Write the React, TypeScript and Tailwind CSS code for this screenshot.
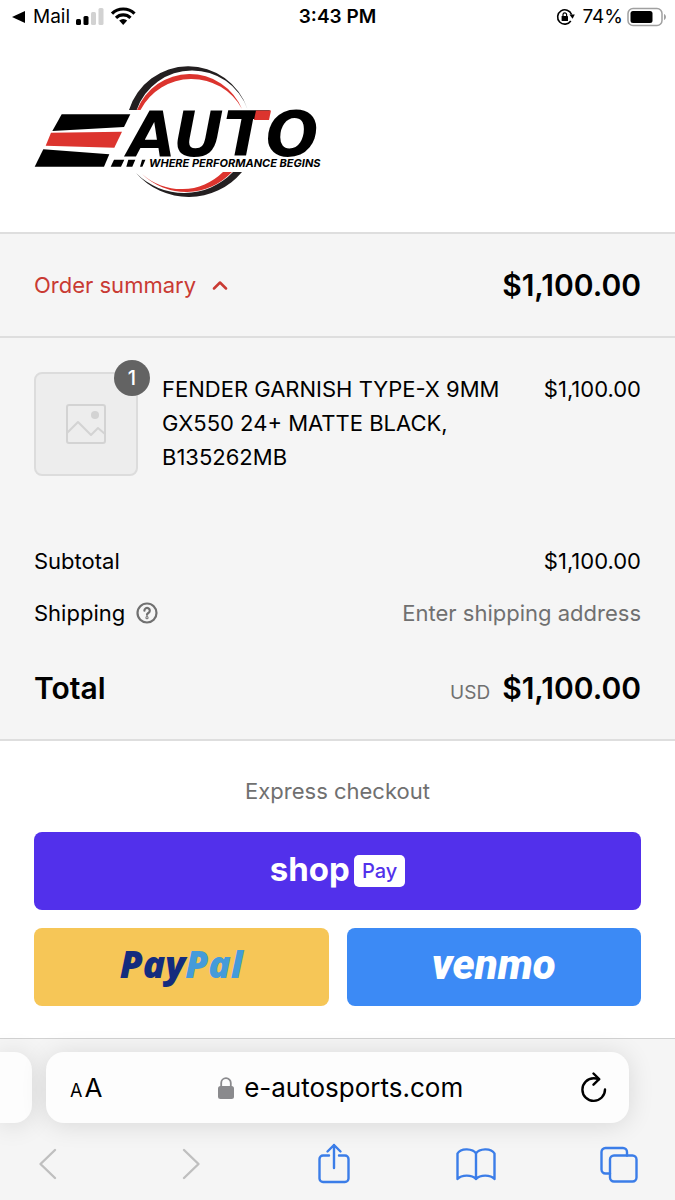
import type { ReactNode } from "react";

function StatusBar() {
  return (
    <div className="grid grid-cols-3 items-center bg-white px-3 text-[19px] leading-[34px] text-black">
      <div className="flex items-center gap-1.5">
        <a href="#mail" className="flex items-center gap-2">
          <svg width="13" height="12" viewBox="0 0 13 12" aria-hidden="true">
            <path d="M0 6 13 0v12z" fill="currentColor" />
          </svg>
          Mail
        </a>
        <svg width="60" height="20" viewBox="0 0 60 20" aria-label="Signal and Wi-Fi">
          <rect x="0" y="12" width="5" height="6" rx="1.5" />
          <rect x="7.500" y="9" width="5" height="9" rx="1.500" />
          <rect x="15" y="5" width="5" height="13" rx="1.500" fill="#d2d2d2" />
          <rect x="22.500" y="1" width="5" height="17" rx="1.500" fill="#d2d2d2" />
          <g fill="none" stroke="#000" strokeWidth="3.200">
            <path d="M36 6.600a16 16 0 0 1 22.500 0" />
            <path d="M40 10.800a10.500 10.500 0 0 1 14.500 0" />
          </g>
          <path d="M43.200 13.600a6 6 0 0 1 8 0l-4 4.400z" />
        </svg>
      </div>
      <div className="text-center font-semibold">3:43 PM</div>
      <div className="-mr-1 flex items-center justify-end gap-1">
        <svg width="20" height="18" viewBox="0 0 20 18" className="mr-0.5" aria-label="Rotation lock">
          <path d="M14.800 13A7.200 7.200 0 1 1 15.600 6.500" fill="none" stroke="#000" strokeWidth="1.600" />
          <path d="M13.400 6.500h5.400l-2.200 4.300z" />
          <rect x="5.600" y="8" width="6.400" height="5" rx=".6" />
          <path d="M7 8V6.600a1.800 1.800 0 0 1 3.600 0V8" fill="none" stroke="#000" strokeWidth="1.200" />
        </svg>
        74%
        <svg width="40" height="20" viewBox="0 0 40 20" aria-label="Battery">
          <rect x="1" y="1.500" width="34" height="17" rx="5" fill="none" stroke="#a0a0a0" strokeWidth="1.500" />
          <rect x="3.500" y="4" width="22" height="12" rx="2.500" />
          <path d="M37 7v6c2.600-1 2.600-5 0-6z" fill="#a0a0a0" />
        </svg>
      </div>
    </div>
  );
}

function Logo() {
  return (
    <svg width="310" height="132" viewBox="34 66 310 132" role="img" aria-label="E-Auto">
      <g fill="#231f20">
        <path d="M129 110A62.200 62.200 0 0 1 247.500 109A58.800 58.800 0 0 0 136.700 110z" />
        <path d="M136 173A69.600 69.600 0 0 0 242 172H233A67.600 67.600 0 0 1 136 173z" />
      </g>
      <g fill="#dc342e">
        <path d="M137 110A56.600 56.600 0 0 1 242 109A57.400 57.400 0 0 0 140.500 110z" />
        <path d="M142 174A62.800 62.800 0 0 0 232 172H223A59 59 0 0 1 142 174z" />
        <path d="M51 132.700 122 131.700 114.300 147.700 45.700 145.700z" />
      </g>
      <path d="M61.700 114.300H130.300L124 127 52.300 131z" />
      <path d="M43.300 149.300 109.300 154.300 104 166.700H34.700z" />
      <path d="M114 159.700h10.300l-3.300 7h-10.300zM128.300 159.700h7l-3 7h-6zM142 159.700h3.400l-3 7H140z" />
      <text x="128" y="156" className="font-['DejaVu_Sans',sans-serif] text-[62px] font-bold italic">
        AUTO
      </text>
      <path d="M256 110.500h15l-2 9.500h-15z" fill="#dc342e" />
      <text x="149" y="167" className="font-[Inter,sans-serif] text-[11px] font-bold italic">
        WHERE PERFORMANCE BEGINS
      </text>
    </svg>
  );
}

function SummaryRow({ label, children }: { label: ReactNode; children: ReactNode }) {
  return (
    <div className="flex items-center justify-between">
      <dt className="flex items-center gap-2.5">{label}</dt>
      <dd>{children}</dd>
    </div>
  );
}

function OrderSummary() {
  return (
    <>
      <section className="flex items-center justify-between border-t-2 border-[#dedede] bg-[#f5f5f5] px-[34px] py-[33px] leading-9">
        <button type="button" aria-expanded="true" className="flex items-center gap-4 text-[#c93a33]">
          Order summary
          <svg width="16" height="10" viewBox="0 0 16 10" aria-hidden="true">
            <path d="m2 8.500 6-6 6 6" fill="none" stroke="currentColor" strokeWidth="2.500" strokeLinecap="round" strokeLinejoin="round" />
          </svg>
        </button>
        <strong className="text-[30px] font-semibold">$1,100.00</strong>
      </section>
      <section className="border-y-2 border-[#dedede] bg-[#f5f5f5] px-[34px] pt-[34px] pb-[31px] leading-[34px]">
        <div className="flex items-start gap-6">
          <div className="relative flex size-[104px] shrink-0 items-center justify-center rounded-lg border-2 border-[#dcdcdc] bg-[#ededed]">
            <svg width="40" height="40" viewBox="0 0 40 40" fill="none" stroke="#d3d3d3" strokeWidth="2" strokeLinejoin="round" aria-hidden="true">
              <rect x="1" y="1" width="38" height="38" rx="2" />
              <path d="m1 29 11-11 13 13 7-7 7 6" />
              <circle cx="29" cy="11" r="4" fill="#d3d3d3" stroke="none" />
            </svg>
            <span className="absolute -top-3.5 -right-3.5 flex size-9 items-center justify-center rounded-full bg-[#636363] text-xl font-medium text-white">
              1
            </span>
          </div>
          <p className="flex-1">FENDER GARNISH TYPE-X 9MM GX550 24+ MATTE BLACK, B135262MB</p>
          <span>$1,100.00</span>
        </div>
        <dl className="mt-[68px] flex flex-col gap-[18px]">
          <SummaryRow label="Subtotal">$1,100.00</SummaryRow>
          <SummaryRow
            label={
              <>
                Shipping
                <button type="button" aria-label="Shipping policy">
                  <svg width="24" height="24" viewBox="0 0 24 24" fill="none" stroke="#707070" strokeWidth="2.200" strokeLinecap="round">
                    <circle cx="12" cy="12" r="9.500" />
                    <path d="M9.400 9.700a2.700 2.700 0 1 1 4.200 2.100c-1 .7-1.600 1-1.600 2" />
                    <circle cx="12" cy="16.700" r=".5" />
                  </svg>
                </button>
              </>
            }
          >
            <span className="text-[#707070]">Enter shipping address</span>
          </SummaryRow>
          <div className="mt-5 flex items-baseline justify-between leading-10">
            <dt className="text-[30px] font-semibold">Total</dt>
            <dd className="flex items-baseline gap-3">
              <span className="text-[19px] leading-7 text-[#707070]">USD</span>
              <strong className="text-[30px] font-semibold">$1,100.00</strong>
            </dd>
          </div>
        </dl>
      </section>
    </>
  );
}

function ExpressCheckout() {
  return (
    <section className="bg-white px-[34px] pt-[33px] pb-8">
      <h2 className="text-center leading-[34px] text-[#707070]">Express checkout</h2>
      <div className="mt-6 grid grid-cols-2 gap-[18px]">
        <button type="button" className="col-span-2 flex h-[78px] items-center justify-center gap-1 rounded-lg bg-[#5230eb] text-white">
          <span className="pb-1 text-[33px] leading-8 font-bold">shop</span>
          <span className="rounded-[5px] bg-white px-2 text-xl leading-8 font-medium text-[#5230eb]">Pay</span>
        </button>
        <button type="button" className="flex h-[78px] items-center justify-center rounded-lg bg-[#f6c657] pb-1.5 font-['Open_Sans',sans-serif] text-[37px] font-extrabold text-[#142c7e] italic">
          Pay<span className="text-[#449bda]">Pal</span>
        </button>
        <button type="button" className="flex h-[78px] items-center justify-center rounded-lg bg-[#3c8af5] pb-1.5 font-[Roboto,sans-serif] text-[42px] font-black text-white italic">
          venmo
        </button>
      </div>
    </section>
  );
}

function ToolButton({ label, muted = false, children }: { label: string; muted?: boolean; children: ReactNode }) {
  return (
    <button type="button" aria-label={label} className={muted ? "text-[#bfbfbf]" : "text-[#3b7de8]"}>
      <svg width="40" height="42" viewBox="0 0 40 42" fill="none" stroke="currentColor" strokeWidth="2.400" strokeLinecap="round" strokeLinejoin="round">
        {children}
      </svg>
    </button>
  );
}

function BrowserBar() {
  return (
    <footer className="border-t border-[#d2d2d2] bg-[#f5f5f5] pt-[13px] pb-4">
      <div className="flex gap-3.5 overflow-x-clip pr-[46px]">
        <div className="w-8 rounded-r-[18px] bg-[#fdfdfd] shadow-[0_2px_26px_rgba(0,0,0,0.12)]" />
        <div className="flex h-[71px] flex-1 items-center justify-between rounded-[18px] bg-[#fdfdfd] pr-5 pl-6 shadow-[0_2px_26px_rgba(0,0,0,0.12)]">
          <button type="button" aria-label="Page settings" className="flex items-baseline gap-0.5">
            <span className="text-lg">A</span>
            <span className="text-[26px]">A</span>
          </button>
          <button type="button" className="flex items-center gap-2.5 text-[26px]">
            <svg width="16" height="22" viewBox="0 0 16 22" aria-hidden="true">
              <rect y="9" width="16" height="13" rx="2.500" fill="#8a8a8d" />
              <path d="M3.200 10V6a4.800 4.800 0 0 1 9.600 0v4" fill="none" stroke="#8a8a8d" strokeWidth="1.800" />
            </svg>
            e-autosports.com
          </button>
          <button type="button" aria-label="Reload">
            <svg width="30" height="32" viewBox="0 0 30 32" fill="none" stroke="#000" strokeWidth="2.400" strokeLinecap="round" strokeLinejoin="round">
              <path d="M26 17.500a11.300 11.300 0 1 1-11.300-11.200c2 0 3.500.3 5 1" />
              <path d="m14.500 1.500 5.700 5.700-5.700 5.500" />
            </svg>
          </button>
        </div>
      </div>
      <nav aria-label="Browser tools" className="mt-5 flex justify-between pr-9 pl-7">
        <ToolButton label="Back" muted>
          <path d="M27 7 12.500 21 27 35" />
        </ToolButton>
        <ToolButton label="Forward" muted>
          <path d="m13 7 14.500 14L13 35" />
        </ToolButton>
        <ToolButton label="Share">
          <path d="M15 12.500H9a3.500 3.500 0 0 0-3.500 3.500v19.500A3.500 3.500 0 0 0 9 39h22a3.500 3.500 0 0 0 3.500-3.500V16a3.500 3.500 0 0 0-3.500-3.500h-6" />
          <path d="M20 25V2M13.500 8.500 20 2l6.500 6.500" />
        </ToolButton>
        <ToolButton label="Bookmarks">
          <path d="M20 10.500C17 5.500 5 4.500 1.500 10.500V36c4-4.500 14.500-4.500 18.500 0 4-4.500 14.500-4.500 18.500 0V10.500C35 4.500 23 5.500 20 10.500zV36" />
        </ToolButton>
        <ToolButton label="Tabs">
          <rect x="11" y="12.500" width="26.500" height="26" rx="4" />
          <path d="M11 30.500H6.500a4 4 0 0 1-4-4V9a4 4 0 0 1 4-4H24a4 4 0 0 1 4 4v3.500" />
        </ToolButton>
      </nav>
    </footer>
  );
}

export default function App() {
  return (
    <div className="min-h-screen bg-white font-[Inter,sans-serif] text-[22px] text-black">
      <StatusBar />
      <header className="bg-white px-[34px] pt-8 pb-[34px]">
        <a href="#home" className="block">
          <Logo />
        </a>
      </header>
      <main>
        <OrderSummary />
        <ExpressCheckout />
      </main>
      <BrowserBar />
    </div>
  );
}
